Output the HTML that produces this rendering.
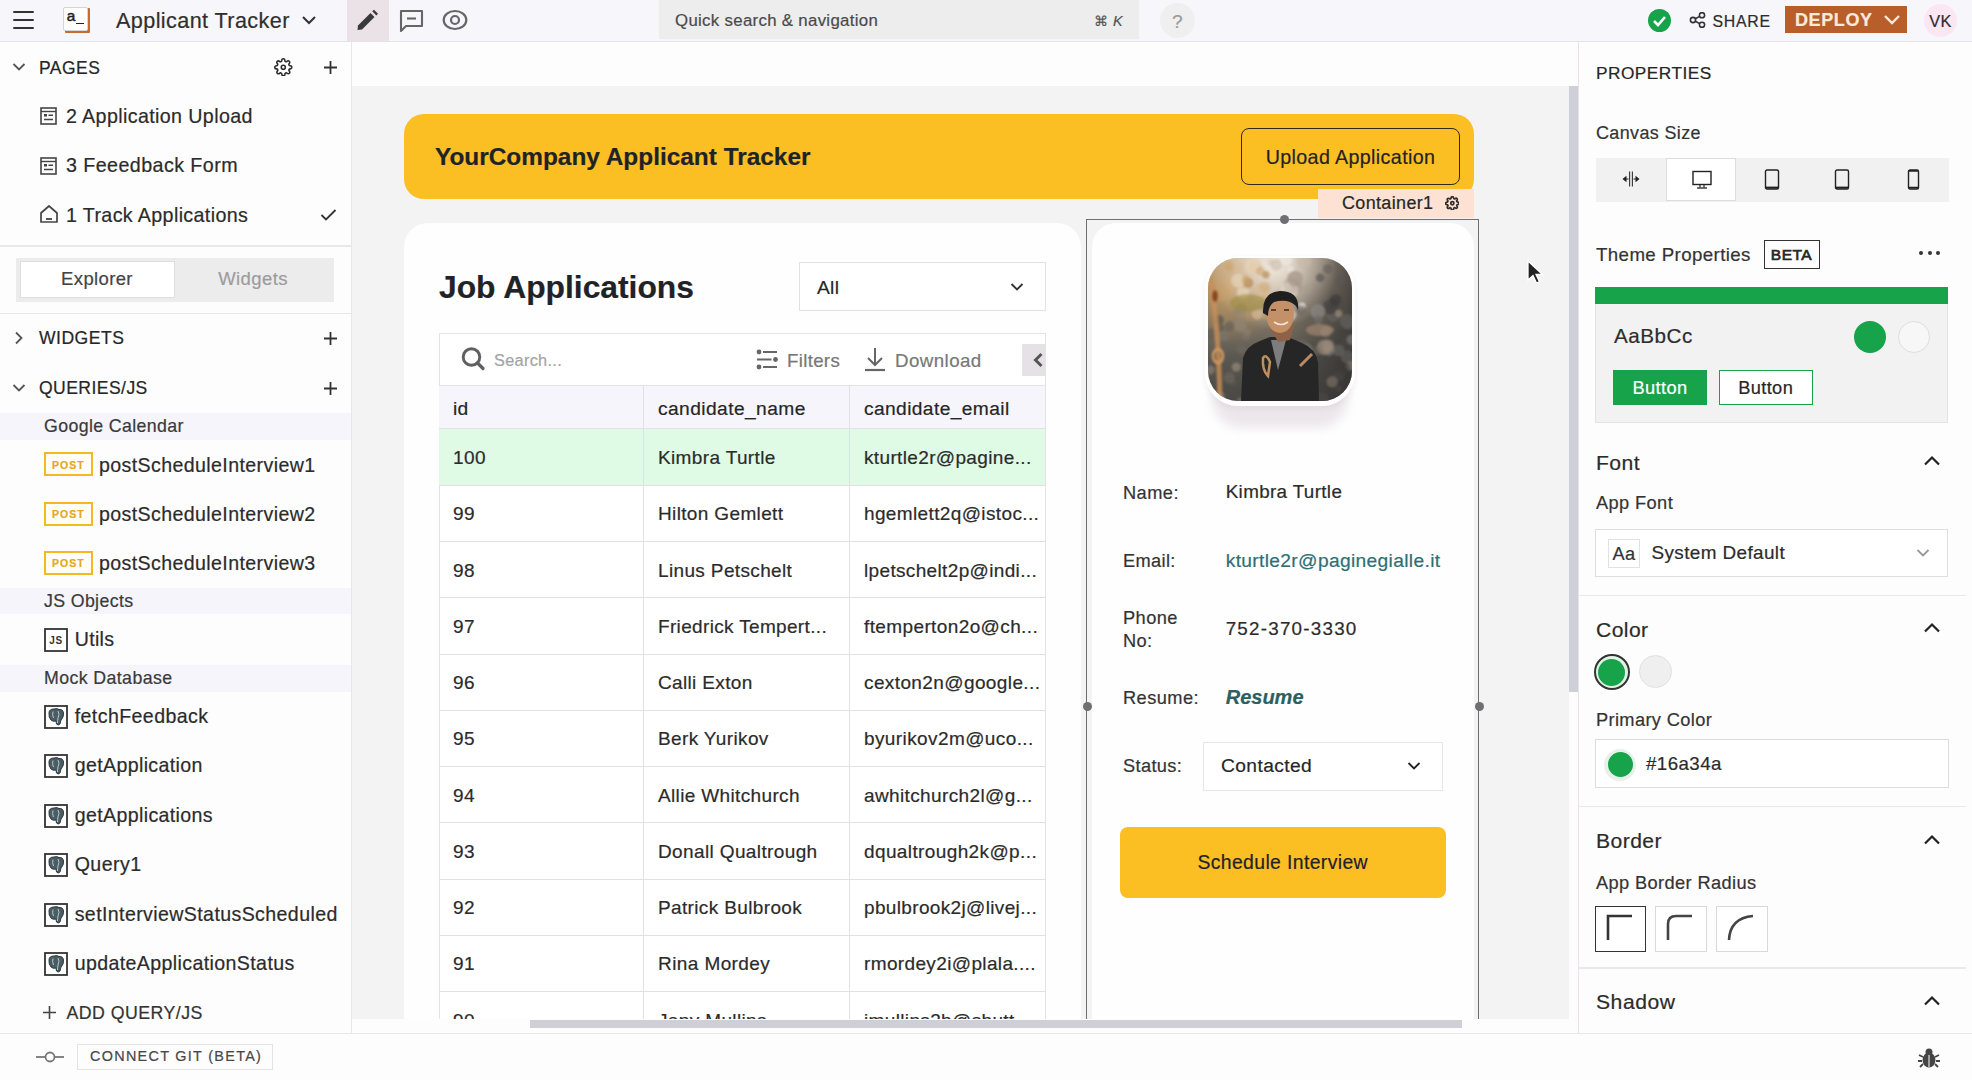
<!DOCTYPE html><html><head><meta charset="utf-8"><style>
html,body{margin:0;padding:0;width:1972px;height:1080px;overflow:hidden;background:#fdfdfd;}
body{position:relative;font-family:"Liberation Sans",sans-serif;-webkit-text-stroke:0.2px currentColor;}
body>div,body>svg{position:absolute;}
</style></head><body>
<div style="left:0px;top:0px;width:1972px;height:41px;background:#f7f7fb;"></div>
<div style="left:0px;top:41px;width:1972px;height:1px;background:#e7e2e8;"></div>
<div style="left:0px;top:42px;width:351px;height:991px;background:#fdfdfd;"></div>
<div style="left:351px;top:42px;width:1px;height:991px;background:#e9e6ea;"></div>
<div style="left:352px;top:42px;width:1226px;height:44px;background:#fdfdfd;"></div>
<div style="left:352px;top:86px;width:1217px;height:933px;background:#f3f3f3;"></div>
<div style="left:1569px;top:86px;width:9px;height:606px;background:#cfcfd7;"></div>
<div style="left:1569px;top:692px;width:9px;height:327px;background:#fdfdfd;"></div>
<div style="left:1578px;top:42px;width:1px;height:991px;background:#e9e2e9;"></div>
<div style="left:1579px;top:42px;width:393px;height:991px;background:#fdfdfd;"></div>
<div style="left:12.7px;top:10.5px;width:21.3px;height:2.0px;background:#333;border-radius:1px;"></div>
<div style="left:12.7px;top:18.9px;width:21.3px;height:2.0px;background:#333;border-radius:1px;"></div>
<div style="left:12.7px;top:27.4px;width:21.3px;height:2.0px;background:#333;border-radius:1px;"></div>
<div style="left:65px;top:8px;width:24.599999999999994px;height:24.6px;background:#c96a2e;border-radius:1px;"></div>
<div style="left:63.3px;top:6.5px;width:24.5px;height:24.5px;background:#fff;border:1px solid #d5d5d5;border-radius:2px;box-sizing:border-box;"></div>
<div style="top:7.46px;font-size:15.36px;line-height:18.43px;color:#222;font-weight:400;white-space:nowrap;letter-spacing:0.356px;left:66.8px;-webkit-text-stroke:0.5px #222;">a</div>
<div style="left:76px;top:22.5px;width:8px;height:1.8000000000000007px;background:#222;"></div>
<div style="top:7.56px;font-size:21.6px;line-height:25.92px;color:#2f2f2f;font-weight:400;white-space:nowrap;letter-spacing:0.409px;left:116px;">Applicant Tracker</div>
<svg style="left:300px;top:13px;" width="18" height="14" viewBox="0 0 18 14"><path d="M3 4 L9 10 L15 4" fill="none" stroke="#333" stroke-width="2"/></svg>
<div style="left:347px;top:0px;width:42px;height:41px;background:#ebe2e8;"></div>
<svg style="left:356px;top:9px;" width="24" height="24" viewBox="0 0 24 24"><path d="M1.5 21 L2 16.5 L14.5 4 L18.5 8 L6 20.5 Z" fill="#3a3a3a"/><path d="M16.2 2.3 L18 0.8 L22 4.8 L20.3 6.5 Z" fill="#3a3a3a"/></svg>
<svg style="left:399px;top:9px;" width="26" height="24" viewBox="0 0 26 24"><path d="M2 2 H23 V17 H7 L2 22 Z" fill="none" stroke="#666" stroke-width="2.1" stroke-linejoin="round"/><path d="M8 9.5 H17" stroke="#666" stroke-width="2.1"/></svg>
<svg style="left:442px;top:9px;" width="26" height="22" viewBox="0 0 26 22"><ellipse cx="13" cy="11" rx="11.3" ry="9" fill="none" stroke="#666" stroke-width="2.2"/><circle cx="13" cy="11" r="4" fill="none" stroke="#666" stroke-width="2.2"/></svg>
<div style="left:659px;top:0px;width:480px;height:38.5px;background:#ededed;"></div>
<div style="top:10.70px;font-size:16.8px;line-height:20.16px;color:#4a4a4a;font-weight:400;white-space:nowrap;letter-spacing:0.325px;left:675px;">Quick search &amp; navigation</div>
<div style="top:12.87px;font-size:14.4px;line-height:17.28px;color:#555;font-weight:400;white-space:nowrap;letter-spacing:0.339px;left:123px;width:1000px;text-align:right;">&#8984; <i>K</i></div>
<div style="left:1160px;top:3px;width:35px;height:35px;border-radius:50%;background:#efefef;"></div>
<div style="top:9.83px;font-size:19.2px;line-height:23.04px;color:#9a9a9a;font-weight:400;white-space:nowrap;letter-spacing:0.445px;left:677.5px;width:1000px;text-align:center;">?</div>
<div style="left:1648px;top:8.5px;width:23px;height:23px;border-radius:50%;background:#16a34a;"></div>
<svg style="left:1648px;top:8.5px;" width="23" height="23" viewBox="0 0 23 23"><path d="M6 12 L10 16 L17 8" fill="none" stroke="#fff" stroke-width="2.6"/></svg>
<svg style="left:1689px;top:12px;" width="18" height="16" viewBox="0 0 18 16"><circle cx="4" cy="8" r="2.6" fill="none" stroke="#333" stroke-width="1.6"/><circle cx="13" cy="3.2" r="2.6" fill="none" stroke="#333" stroke-width="1.6"/><circle cx="13" cy="12.8" r="2.6" fill="none" stroke="#333" stroke-width="1.6"/><path d="M6.3 6.8 L10.7 4.4 M6.3 9.2 L10.7 11.6" stroke="#333" stroke-width="1.6"/></svg>
<div style="top:11.71px;font-size:15.84px;line-height:19.01px;color:#2d2d2d;font-weight:500;white-space:nowrap;letter-spacing:0.743px;left:1712.5px;">SHARE</div>
<div style="left:1785px;top:6px;width:122px;height:27px;background:#b75e2b;"></div>
<div style="top:10.46px;font-size:18px;line-height:21.60px;color:#fce9d8;font-weight:700;white-space:nowrap;letter-spacing:0.600px;left:1795px;">DEPLOY</div>
<svg style="left:1882px;top:13px;" width="20" height="14" viewBox="0 0 20 14"><path d="M3 3 L10 10 L17 3" fill="none" stroke="#fce9d8" stroke-width="2.4"/></svg>
<div style="left:1924px;top:4px;width:33px;height:33px;border-radius:50%;background:#fbe7f3;"></div>
<div style="top:11.55px;font-size:16.32px;line-height:19.58px;color:#2d2d2d;font-weight:400;white-space:nowrap;letter-spacing:0.454px;left:1440.5px;width:1000px;text-align:center;">VK</div>
<svg style="left:12px;top:62px;" width="14" height="10" viewBox="0 0 14 10"><path d="M1.5 2 L7 7.5 L12.5 2" fill="none" stroke="#555" stroke-width="1.8"/></svg>
<div style="top:57.96px;font-size:17.47px;line-height:20.96px;color:#262626;font-weight:400;white-space:nowrap;letter-spacing:0.491px;left:39px;">PAGES</div>
<svg style="left:274.3px;top:57.7px;" width="18.6" height="18.6" viewBox="0 0 18.6 18.6"><g transform="scale(0.7750)"><path d="M19.4 15a1.65 1.65 0 0 0 .33 1.82l.06.06a2 2 0 0 1 0 2.83 2 2 0 0 1-2.83 0l-.06-.06a1.65 1.65 0 0 0-1.82-.33 1.650 1.65 0 0 0-1 1.51V21a2 2 0 0 1-2 2 2 2 0 0 1-2-2v-.09A1.65 1.65 0 0 0 9 19.4a1.65 1.65 0 0 0-1.82.33l-.06.06a2 2 0 0 1-2.830 0 2 2 0 0 1 0-2.83l.06-.06a1.65 1.65 0 0 0 .33-1.82 1.65 1.65 0 0 0-1.51-1H3a2 2 0 0 1-2-2 2 2 0 0 1 2-2h.09A1.65 1.65 0 0 0 4.6 9a1.65 1.65 0 0 0-.33-1.82l-.06-.06a2 2 0 0 1 0-2.83 2 2 0 0 1 2.83 0l.06.06a1.65 1.65 0 0 0 1.82.33H9a1.65 1.65 0 0 0 1-1.51V3a2 2 0 0 1 2-2 2 2 0 0 1 2 2v.09a1.65 1.65 0 0 0 1 1.51 1.65 1.65 0 0 0 1.82-.33l.06-.06a2 2 0 0 1 2.83 0 2 2 0 0 1 0 2.83l-.06.06a1.65 1.65 0 0 0-.33 1.82V9a1.65 1.65 0 0 0 1.51 1H21a2 2 0 0 1 2 2 2 2 0 0 1-2 2h-.09a1.65 1.65 0 0 0-1.51 1z" fill="none" stroke="#2d2d2d" stroke-width="2.06"/><circle cx="12" cy="12" r="2.6" fill="none" stroke="#2d2d2d" stroke-width="2.06"/></g></svg>
<svg style="left:323.5px;top:60.5px;" width="13" height="13" viewBox="0 0 13 13"><path d="M6.5 0 V13 M0 6.5 H13" stroke="#333" stroke-width="1.8"/></svg>
<svg style="left:40px;top:107px;" width="18" height="18" viewBox="0 0 18 18"><rect x="1" y="1" width="15" height="16" fill="none" stroke="#444" stroke-width="1.6"/><path d="M1 4.5 H16" stroke="#444" stroke-width="1.4"/><rect x="4" y="7" width="3" height="2.5" fill="#444"/><path d="M8.5 8.2 H13 M4 12.5 H13" stroke="#444" stroke-width="1.4"/></svg>
<div style="top:104.87px;font-size:19.68px;line-height:23.62px;color:#2b2b2b;font-weight:400;white-space:nowrap;letter-spacing:0.374px;left:66px;">2 Application Upload</div>
<svg style="left:40px;top:156.5px;" width="18" height="18" viewBox="0 0 18 18"><rect x="1" y="1" width="15" height="16" fill="none" stroke="#444" stroke-width="1.6"/><path d="M1 4.5 H16" stroke="#444" stroke-width="1.4"/><rect x="4" y="7" width="3" height="2.5" fill="#444"/><path d="M8.5 8.2 H13 M4 12.5 H13" stroke="#444" stroke-width="1.4"/></svg>
<div style="top:154.37px;font-size:19.68px;line-height:23.62px;color:#2b2b2b;font-weight:400;white-space:nowrap;letter-spacing:0.430px;left:66px;">3 Feeedback Form</div>
<svg style="left:39px;top:204px;" width="20" height="20" viewBox="0 0 20 20"><path d="M2 9 L10 2 L18 9 V18 H2 Z" fill="none" stroke="#444" stroke-width="1.7" stroke-linejoin="round"/><path d="M7 15 H13" stroke="#444" stroke-width="1.8"/></svg>
<div style="top:203.87px;font-size:19.68px;line-height:23.62px;color:#2b2b2b;font-weight:400;white-space:nowrap;letter-spacing:0.365px;left:66px;">1 Track Applications</div>
<svg style="left:320px;top:208px;" width="17" height="14" viewBox="0 0 17 14"><path d="M1.5 7 L6 11.5 L15.5 2" fill="none" stroke="#333" stroke-width="1.8"/></svg>
<div style="left:0px;top:245px;width:351px;height:1.5px;background:#ece5ea;"></div>
<div style="left:16px;top:257.5px;width:318px;height:44.0px;background:#ececec;"></div>
<div style="left:19.5px;top:261px;width:155.5px;height:37px;background:#fff;border:1px solid #dedede;box-sizing:border-box;"></div>
<div style="top:268.16px;font-size:18.53px;line-height:22.24px;color:#444;font-weight:400;white-space:nowrap;letter-spacing:0.359px;left:-403px;width:1000px;text-align:center;">Explorer</div>
<div style="top:268.16px;font-size:18.53px;line-height:22.24px;color:#9c9c9c;font-weight:400;white-space:nowrap;letter-spacing:0.398px;left:-247px;width:1000px;text-align:center;">Widgets</div>
<div style="left:0px;top:312.5px;width:351px;height:1.5px;background:#ebe5ea;"></div>
<svg style="left:14px;top:331px;" width="10" height="14" viewBox="0 0 10 14"><path d="M2 1.5 L7.5 7 L2 12.5" fill="none" stroke="#555" stroke-width="1.8"/></svg>
<div style="top:328.37px;font-size:17.57px;line-height:21.08px;color:#262626;font-weight:400;white-space:nowrap;letter-spacing:0.488px;left:39px;">WIDGETS</div>
<svg style="left:323.5px;top:331.5px;" width="13" height="13" viewBox="0 0 13 13"><path d="M6.5 0 V13 M0 6.5 H13" stroke="#333" stroke-width="1.8"/></svg>
<svg style="left:12px;top:383px;" width="14" height="10" viewBox="0 0 14 10"><path d="M1.5 2 L7 7.5 L12.5 2" fill="none" stroke="#555" stroke-width="1.8"/></svg>
<div style="top:378.37px;font-size:17.57px;line-height:21.08px;color:#262626;font-weight:400;white-space:nowrap;letter-spacing:0.435px;left:39px;">QUERIES/JS</div>
<svg style="left:323.5px;top:381.5px;" width="13" height="13" viewBox="0 0 13 13"><path d="M6.5 0 V13 M0 6.5 H13" stroke="#333" stroke-width="1.8"/></svg>
<div style="left:0px;top:413px;width:351px;height:27px;background:#f5f5fb;"></div>
<div style="top:416.19px;font-size:17.76px;line-height:21.31px;color:#3a3a3a;font-weight:400;white-space:nowrap;letter-spacing:0.373px;left:44px;">Google Calendar</div>
<div style="left:44px;top:452.2px;width:48.5px;height:24.19999999999999px;border:2px solid #f4b823;box-sizing:border-box;background:#fffdf6;"></div>
<div style="top:458.76px;font-size:10.5px;line-height:12.60px;color:#e3a81d;font-weight:700;white-space:nowrap;letter-spacing:1.000px;left:-431.7px;width:1000px;text-align:center;">POST</div>
<div style="top:453.67px;font-size:19.58px;line-height:23.50px;color:#2b2b2b;font-weight:400;white-space:nowrap;letter-spacing:0.394px;left:99px;">postScheduleInterview1</div>
<div style="left:44px;top:501.5px;width:48.5px;height:24.200000000000045px;border:2px solid #f4b823;box-sizing:border-box;background:#fffdf6;"></div>
<div style="top:508.06px;font-size:10.5px;line-height:12.60px;color:#e3a81d;font-weight:700;white-space:nowrap;letter-spacing:1.000px;left:-431.7px;width:1000px;text-align:center;">POST</div>
<div style="top:502.97px;font-size:19.58px;line-height:23.50px;color:#2b2b2b;font-weight:400;white-space:nowrap;letter-spacing:0.394px;left:99px;">postScheduleInterview2</div>
<div style="left:44px;top:550.8px;width:48.5px;height:24.200000000000045px;border:2px solid #f4b823;box-sizing:border-box;background:#fffdf6;"></div>
<div style="top:557.36px;font-size:10.5px;line-height:12.60px;color:#e3a81d;font-weight:700;white-space:nowrap;letter-spacing:1.000px;left:-431.7px;width:1000px;text-align:center;">POST</div>
<div style="top:552.27px;font-size:19.58px;line-height:23.50px;color:#2b2b2b;font-weight:400;white-space:nowrap;letter-spacing:0.394px;left:99px;">postScheduleInterview3</div>
<div style="left:0px;top:588px;width:351px;height:26px;background:#f5f5fb;"></div>
<div style="top:591.19px;font-size:17.76px;line-height:21.31px;color:#3a3a3a;font-weight:400;white-space:nowrap;letter-spacing:0.358px;left:44px;">JS Objects</div>
<svg style="left:44px;top:628px;" width="24" height="24" viewBox="0 0 24 24"><rect x="1" y="1" width="22" height="22" fill="#fff" stroke="#333" stroke-width="1.8"/><text x="12" y="16" font-family="Liberation Sans" font-size="10" font-weight="700" text-anchor="middle" letter-spacing="0.6" fill="#333">JS</text></svg>
<div style="top:628.17px;font-size:19.58px;line-height:23.50px;color:#2b2b2b;font-weight:400;white-space:nowrap;letter-spacing:0.317px;left:74.7px;">Utils</div>
<div style="left:0px;top:665px;width:351px;height:27px;background:#f5f5fb;"></div>
<div style="top:667.59px;font-size:17.76px;line-height:21.31px;color:#3a3a3a;font-weight:400;white-space:nowrap;letter-spacing:0.395px;left:44px;">Mock Database</div>
<svg style="left:44px;top:705.0px;" width="24" height="24" viewBox="0 0 24 24"><rect x="1" y="1" width="22" height="22" fill="#fff" stroke="#333" stroke-width="1.8"/><path d="M5 8 Q5 4 10 4 Q13 3 15 4.5 Q19 4 19.5 8 Q20 12 17 15 L16 19 Q14 21 12.5 19 L12 16 Q9 17 7 15 Q4.5 12 5 8Z" fill="#4e5b60" stroke="#2e3a3f" stroke-width="1"/><path d="M9 6.5 Q8 10 9.5 13 M14 6 Q16 9 14 13 Q13.5 16 13.5 18" stroke="#9fd3d8" stroke-width="1" fill="none"/></svg>
<div style="top:705.07px;font-size:19.58px;line-height:23.50px;color:#2b2b2b;font-weight:400;white-space:nowrap;letter-spacing:0.412px;left:74.7px;">fetchFeedback</div>
<svg style="left:44px;top:754.4px;" width="24" height="24" viewBox="0 0 24 24"><rect x="1" y="1" width="22" height="22" fill="#fff" stroke="#333" stroke-width="1.8"/><path d="M5 8 Q5 4 10 4 Q13 3 15 4.5 Q19 4 19.5 8 Q20 12 17 15 L16 19 Q14 21 12.5 19 L12 16 Q9 17 7 15 Q4.5 12 5 8Z" fill="#4e5b60" stroke="#2e3a3f" stroke-width="1"/><path d="M9 6.5 Q8 10 9.5 13 M14 6 Q16 9 14 13 Q13.5 16 13.5 18" stroke="#9fd3d8" stroke-width="1" fill="none"/></svg>
<div style="top:754.47px;font-size:19.58px;line-height:23.50px;color:#2b2b2b;font-weight:400;white-space:nowrap;letter-spacing:0.366px;left:74.7px;">getApplication</div>
<svg style="left:44px;top:803.8px;" width="24" height="24" viewBox="0 0 24 24"><rect x="1" y="1" width="22" height="22" fill="#fff" stroke="#333" stroke-width="1.8"/><path d="M5 8 Q5 4 10 4 Q13 3 15 4.5 Q19 4 19.5 8 Q20 12 17 15 L16 19 Q14 21 12.5 19 L12 16 Q9 17 7 15 Q4.5 12 5 8Z" fill="#4e5b60" stroke="#2e3a3f" stroke-width="1"/><path d="M9 6.5 Q8 10 9.5 13 M14 6 Q16 9 14 13 Q13.5 16 13.5 18" stroke="#9fd3d8" stroke-width="1" fill="none"/></svg>
<div style="top:803.87px;font-size:19.58px;line-height:23.50px;color:#2b2b2b;font-weight:400;white-space:nowrap;letter-spacing:0.369px;left:74.7px;">getApplications</div>
<svg style="left:44px;top:853.2px;" width="24" height="24" viewBox="0 0 24 24"><rect x="1" y="1" width="22" height="22" fill="#fff" stroke="#333" stroke-width="1.8"/><path d="M5 8 Q5 4 10 4 Q13 3 15 4.5 Q19 4 19.5 8 Q20 12 17 15 L16 19 Q14 21 12.5 19 L12 16 Q9 17 7 15 Q4.5 12 5 8Z" fill="#4e5b60" stroke="#2e3a3f" stroke-width="1"/><path d="M9 6.5 Q8 10 9.5 13 M14 6 Q16 9 14 13 Q13.5 16 13.5 18" stroke="#9fd3d8" stroke-width="1" fill="none"/></svg>
<div style="top:853.27px;font-size:19.58px;line-height:23.50px;color:#2b2b2b;font-weight:400;white-space:nowrap;letter-spacing:0.446px;left:74.7px;">Query1</div>
<svg style="left:44px;top:902.6px;" width="24" height="24" viewBox="0 0 24 24"><rect x="1" y="1" width="22" height="22" fill="#fff" stroke="#333" stroke-width="1.8"/><path d="M5 8 Q5 4 10 4 Q13 3 15 4.5 Q19 4 19.5 8 Q20 12 17 15 L16 19 Q14 21 12.5 19 L12 16 Q9 17 7 15 Q4.5 12 5 8Z" fill="#4e5b60" stroke="#2e3a3f" stroke-width="1"/><path d="M9 6.5 Q8 10 9.5 13 M14 6 Q16 9 14 13 Q13.5 16 13.5 18" stroke="#9fd3d8" stroke-width="1" fill="none"/></svg>
<div style="top:902.67px;font-size:19.58px;line-height:23.50px;color:#2b2b2b;font-weight:400;white-space:nowrap;letter-spacing:0.390px;left:74.7px;">setInterviewStatusScheduled</div>
<svg style="left:44px;top:952.0px;" width="24" height="24" viewBox="0 0 24 24"><rect x="1" y="1" width="22" height="22" fill="#fff" stroke="#333" stroke-width="1.8"/><path d="M5 8 Q5 4 10 4 Q13 3 15 4.5 Q19 4 19.5 8 Q20 12 17 15 L16 19 Q14 21 12.5 19 L12 16 Q9 17 7 15 Q4.5 12 5 8Z" fill="#4e5b60" stroke="#2e3a3f" stroke-width="1"/><path d="M9 6.5 Q8 10 9.5 13 M14 6 Q16 9 14 13 Q13.5 16 13.5 18" stroke="#9fd3d8" stroke-width="1" fill="none"/></svg>
<div style="top:952.07px;font-size:19.58px;line-height:23.50px;color:#2b2b2b;font-weight:400;white-space:nowrap;letter-spacing:0.383px;left:74.7px;">updateApplicationStatus</div>
<svg style="left:42.5px;top:1005.5px;" width="13" height="13" viewBox="0 0 13 13"><path d="M6.5 0 V13 M0 6.5 H13" stroke="#444" stroke-width="1.6"/></svg>
<div style="top:1003.19px;font-size:17.76px;line-height:21.31px;color:#333;font-weight:400;white-space:nowrap;letter-spacing:0.455px;left:66.5px;">ADD QUERY/JS</div>
<div style="left:404px;top:113.5px;width:1070px;height:85.0px;background:#fbbf24;border-radius:20px;"></div>
<div style="top:141.91px;font-size:24.4px;line-height:29.28px;color:#1f2328;font-weight:700;white-space:nowrap;left:435px;">YourCompany Applicant Tracker</div>
<div style="left:1241px;top:128px;width:219px;height:56.5px;border:1.6px solid #2f2b1c;border-radius:8px;box-sizing:border-box;"></div>
<div style="top:146.37px;font-size:19.68px;line-height:23.62px;color:#1f2328;font-weight:400;white-space:nowrap;letter-spacing:0.377px;left:850.5px;width:1000px;text-align:center;">Upload Application</div>
<div style="left:404px;top:223px;width:677px;height:877px;background:#fefefe;border-radius:24px;"></div>
<div style="top:267.70px;font-size:31.8px;line-height:38.16px;color:#1f2328;font-weight:700;white-space:nowrap;left:439px;">Job Applications</div>
<div style="left:799px;top:262px;width:247px;height:49px;background:#fff;border:1px solid #e5e0e6;box-sizing:border-box;"></div>
<div style="top:275.83px;font-size:19.2px;line-height:23.04px;color:#262626;font-weight:400;white-space:nowrap;letter-spacing:0.296px;left:817px;">All</div>
<svg style="left:1010px;top:282px;" width="14" height="10" viewBox="0 0 14 10"><path d="M1.5 2 L7 7.5 L12.5 2" fill="none" stroke="#333" stroke-width="1.8"/></svg>
<div style="left:438.5px;top:333px;width:607.5px;height:767px;background:#fff;border:1px solid #e6e1e6;box-sizing:border-box;"></div>
<svg style="left:460px;top:346px;" width="26" height="26" viewBox="0 0 26 26"><circle cx="11.5" cy="11" r="8.3" fill="none" stroke="#606060" stroke-width="2.9"/><path d="M17.5 17 L23 22.5" stroke="#606060" stroke-width="3.2" stroke-linecap="round"/></svg>
<div style="top:350.55px;font-size:16.32px;line-height:19.58px;color:#a3a3a3;font-weight:400;white-space:nowrap;letter-spacing:0.302px;left:494px;">Search...</div>
<svg style="left:756px;top:349px;" width="24" height="21" viewBox="0 0 24 21"><circle cx="3" cy="3" r="2.4" fill="#666"/><circle cx="19.5" cy="10.5" r="2.4" fill="#666"/><circle cx="3" cy="18" r="2.4" fill="#666"/><path d="M7 3 H21 M1 10.5 H15.5 M7 18 H21" stroke="#666" stroke-width="2.2"/></svg>
<div style="top:349.78px;font-size:18.72px;line-height:22.46px;color:#777;font-weight:400;white-space:nowrap;letter-spacing:0.303px;left:787px;">Filters</div>
<svg style="left:864px;top:347px;" width="24" height="25" viewBox="0 0 24 25"><path d="M11 1 V18 M4 11 L11 18 L18 11" fill="none" stroke="#666" stroke-width="2"/><path d="M1 23 H21" stroke="#666" stroke-width="2.2"/></svg>
<div style="top:349.78px;font-size:18.72px;line-height:22.46px;color:#777;font-weight:400;white-space:nowrap;letter-spacing:0.434px;left:895px;">Download</div>
<div style="left:1022px;top:344px;width:24px;height:32px;background:#e6e1e6;"></div>
<svg style="left:1032px;top:352px;" width="12" height="16" viewBox="0 0 12 16"><path d="M9.5 2 L3.5 8 L9.5 14" fill="none" stroke="#555" stroke-width="3"/></svg>
<div style="left:439px;top:385px;width:606px;height:44px;background:#f5f5fb;border-top:1px solid #e6e1e6;border-bottom:1px solid #e6e1e6;box-sizing:border-box;"></div>
<div style="top:396.83px;font-size:19.2px;line-height:23.04px;color:#262626;font-weight:400;white-space:nowrap;letter-spacing:0.311px;left:453px;">id</div>
<div style="top:396.83px;font-size:19.2px;line-height:23.04px;color:#262626;font-weight:400;white-space:nowrap;letter-spacing:0.423px;left:658px;">candidate_name</div>
<div style="top:396.83px;font-size:19.2px;line-height:23.04px;color:#262626;font-weight:400;white-space:nowrap;letter-spacing:0.388px;left:864px;">candidate_email</div>
<div style="left:439px;top:429px;width:606px;height:56.5px;background:#dffbe5;"></div>
<div style="top:447.01px;font-size:19.01px;line-height:22.81px;color:#2b2b2b;font-weight:400;white-space:nowrap;letter-spacing:0.440px;left:453px;">100</div>
<div style="top:447.01px;font-size:19.01px;line-height:22.81px;color:#2b2b2b;font-weight:400;white-space:nowrap;letter-spacing:0.362px;left:658px;">Kimbra Turtle</div>
<div style="top:447.01px;font-size:19.01px;line-height:22.81px;color:#2b2b2b;font-weight:400;white-space:nowrap;letter-spacing:0.353px;left:864px;">kturtle2r@pagine...</div>
<div style="left:439px;top:485px;width:606px;height:1px;background:#e4dfe4;"></div>
<div style="top:503.26px;font-size:19.01px;line-height:22.81px;color:#2b2b2b;font-weight:400;white-space:nowrap;letter-spacing:0.440px;left:453px;">99</div>
<div style="top:503.26px;font-size:19.01px;line-height:22.81px;color:#2b2b2b;font-weight:400;white-space:nowrap;letter-spacing:0.358px;left:658px;">Hilton Gemlett</div>
<div style="top:503.26px;font-size:19.01px;line-height:22.81px;color:#2b2b2b;font-weight:400;white-space:nowrap;letter-spacing:0.369px;left:864px;">hgemlett2q@istoc...</div>
<div style="left:439px;top:541px;width:606px;height:1px;background:#e4dfe4;"></div>
<div style="top:559.51px;font-size:19.01px;line-height:22.81px;color:#2b2b2b;font-weight:400;white-space:nowrap;letter-spacing:0.440px;left:453px;">98</div>
<div style="top:559.51px;font-size:19.01px;line-height:22.81px;color:#2b2b2b;font-weight:400;white-space:nowrap;letter-spacing:0.358px;left:658px;">Linus Petschelt</div>
<div style="top:559.51px;font-size:19.01px;line-height:22.81px;color:#2b2b2b;font-weight:400;white-space:nowrap;letter-spacing:0.346px;left:864px;">lpetschelt2p@indi...</div>
<div style="left:439px;top:597px;width:606px;height:1px;background:#e4dfe4;"></div>
<div style="top:615.76px;font-size:19.01px;line-height:22.81px;color:#2b2b2b;font-weight:400;white-space:nowrap;letter-spacing:0.440px;left:453px;">97</div>
<div style="top:615.76px;font-size:19.01px;line-height:22.81px;color:#2b2b2b;font-weight:400;white-space:nowrap;letter-spacing:0.338px;left:658px;">Friedrick Tempert...</div>
<div style="top:615.76px;font-size:19.01px;line-height:22.81px;color:#2b2b2b;font-weight:400;white-space:nowrap;letter-spacing:0.387px;left:864px;">ftemperton2o@ch...</div>
<div style="left:439px;top:654px;width:606px;height:1px;background:#e4dfe4;"></div>
<div style="top:672.01px;font-size:19.01px;line-height:22.81px;color:#2b2b2b;font-weight:400;white-space:nowrap;letter-spacing:0.440px;left:453px;">96</div>
<div style="top:672.01px;font-size:19.01px;line-height:22.81px;color:#2b2b2b;font-weight:400;white-space:nowrap;letter-spacing:0.344px;left:658px;">Calli Exton</div>
<div style="top:672.01px;font-size:19.01px;line-height:22.81px;color:#2b2b2b;font-weight:400;white-space:nowrap;letter-spacing:0.392px;left:864px;">cexton2n@google...</div>
<div style="left:439px;top:710px;width:606px;height:1px;background:#e4dfe4;"></div>
<div style="top:728.26px;font-size:19.01px;line-height:22.81px;color:#2b2b2b;font-weight:400;white-space:nowrap;letter-spacing:0.440px;left:453px;">95</div>
<div style="top:728.26px;font-size:19.01px;line-height:22.81px;color:#2b2b2b;font-weight:400;white-space:nowrap;letter-spacing:0.369px;left:658px;">Berk Yurikov</div>
<div style="top:728.26px;font-size:19.01px;line-height:22.81px;color:#2b2b2b;font-weight:400;white-space:nowrap;letter-spacing:0.399px;left:864px;">byurikov2m@uco...</div>
<div style="left:439px;top:766px;width:606px;height:1px;background:#e4dfe4;"></div>
<div style="top:784.51px;font-size:19.01px;line-height:22.81px;color:#2b2b2b;font-weight:400;white-space:nowrap;letter-spacing:0.440px;left:453px;">94</div>
<div style="top:784.51px;font-size:19.01px;line-height:22.81px;color:#2b2b2b;font-weight:400;white-space:nowrap;letter-spacing:0.355px;left:658px;">Allie Whitchurch</div>
<div style="top:784.51px;font-size:19.01px;line-height:22.81px;color:#2b2b2b;font-weight:400;white-space:nowrap;letter-spacing:0.375px;left:864px;">awhitchurch2l@g...</div>
<div style="left:439px;top:822px;width:606px;height:1px;background:#e4dfe4;"></div>
<div style="top:840.76px;font-size:19.01px;line-height:22.81px;color:#2b2b2b;font-weight:400;white-space:nowrap;letter-spacing:0.440px;left:453px;">93</div>
<div style="top:840.76px;font-size:19.01px;line-height:22.81px;color:#2b2b2b;font-weight:400;white-space:nowrap;letter-spacing:0.376px;left:658px;">Donall Qualtrough</div>
<div style="top:840.76px;font-size:19.01px;line-height:22.81px;color:#2b2b2b;font-weight:400;white-space:nowrap;letter-spacing:0.385px;left:864px;">dqualtrough2k@p...</div>
<div style="left:439px;top:879px;width:606px;height:1px;background:#e4dfe4;"></div>
<div style="top:897.01px;font-size:19.01px;line-height:22.81px;color:#2b2b2b;font-weight:400;white-space:nowrap;letter-spacing:0.440px;left:453px;">92</div>
<div style="top:897.01px;font-size:19.01px;line-height:22.81px;color:#2b2b2b;font-weight:400;white-space:nowrap;letter-spacing:0.360px;left:658px;">Patrick Bulbrook</div>
<div style="top:897.01px;font-size:19.01px;line-height:22.81px;color:#2b2b2b;font-weight:400;white-space:nowrap;letter-spacing:0.346px;left:864px;">pbulbrook2j@livej...</div>
<div style="left:439px;top:935px;width:606px;height:1px;background:#e4dfe4;"></div>
<div style="top:953.26px;font-size:19.01px;line-height:22.81px;color:#2b2b2b;font-weight:400;white-space:nowrap;letter-spacing:0.440px;left:453px;">91</div>
<div style="top:953.26px;font-size:19.01px;line-height:22.81px;color:#2b2b2b;font-weight:400;white-space:nowrap;letter-spacing:0.408px;left:658px;">Rina Mordey</div>
<div style="top:953.26px;font-size:19.01px;line-height:22.81px;color:#2b2b2b;font-weight:400;white-space:nowrap;letter-spacing:0.362px;left:864px;">rmordey2i@plala....</div>
<div style="left:439px;top:991px;width:606px;height:1px;background:#e4dfe4;"></div>
<div style="top:1009.51px;font-size:19.01px;line-height:22.81px;color:#2b2b2b;font-weight:400;white-space:nowrap;letter-spacing:0.440px;left:453px;">90</div>
<div style="top:1009.51px;font-size:19.01px;line-height:22.81px;color:#2b2b2b;font-weight:400;white-space:nowrap;letter-spacing:0.363px;left:658px;">Jany Mullins</div>
<div style="top:1009.51px;font-size:19.01px;line-height:22.81px;color:#2b2b2b;font-weight:400;white-space:nowrap;letter-spacing:0.353px;left:864px;">jmullins2h@shutt...</div>
<div style="left:643px;top:385px;width:1px;height:715px;background:#e4dfe4;"></div>
<div style="left:849px;top:385px;width:1px;height:715px;background:#e4dfe4;"></div>
<div style="left:1091.5px;top:223px;width:382.5px;height:877px;background:#fefefe;border-radius:24px;"></div>
<div style="left:1086px;top:218.5px;width:393px;height:811.5px;border:1.4px solid #6f6f73;box-sizing:border-box;"></div>
<div style="left:1279.5px;top:214.5px;width:9px;height:9px;border-radius:50%;background:#6f6f73;"></div>
<div style="left:1082.5px;top:702px;width:9px;height:9px;border-radius:50%;background:#6f6f73;"></div>
<div style="left:1474.5px;top:702px;width:9px;height:9px;border-radius:50%;background:#6f6f73;"></div>
<div style="left:1318px;top:188.5px;width:156px;height:29.0px;background:#fde2d3;"></div>
<div style="top:193.01px;font-size:17.95px;line-height:21.54px;color:#262626;font-weight:400;white-space:nowrap;letter-spacing:0.366px;left:1342px;">Container1</div>
<svg style="left:1444.7px;top:195.7px;" width="14.6" height="14.6" viewBox="0 0 14.6 14.6"><g transform="scale(0.6083)"><path d="M19.4 15a1.65 1.65 0 0 0 .33 1.82l.06.06a2 2 0 0 1 0 2.83 2 2 0 0 1-2.83 0l-.06-.06a1.65 1.65 0 0 0-1.82-.33 1.650 1.65 0 0 0-1 1.51V21a2 2 0 0 1-2 2 2 2 0 0 1-2-2v-.09A1.65 1.65 0 0 0 9 19.4a1.65 1.65 0 0 0-1.82.33l-.06.06a2 2 0 0 1-2.830 0 2 2 0 0 1 0-2.83l.06-.06a1.65 1.65 0 0 0 .33-1.82 1.65 1.65 0 0 0-1.51-1H3a2 2 0 0 1-2-2 2 2 0 0 1 2-2h.09A1.65 1.65 0 0 0 4.6 9a1.65 1.65 0 0 0-.33-1.82l-.06-.06a2 2 0 0 1 0-2.83 2 2 0 0 1 2.83 0l.06.06a1.65 1.65 0 0 0 1.82.33H9a1.65 1.65 0 0 0 1-1.51V3a2 2 0 0 1 2-2 2 2 0 0 1 2 2v.09a1.65 1.65 0 0 0 1 1.51 1.65 1.65 0 0 0 1.82-.33l.06-.06a2 2 0 0 1 2.83 0 2 2 0 0 1 0 2.83l-.06.06a1.65 1.65 0 0 0-.33 1.82V9a1.65 1.65 0 0 0 1.51 1H21a2 2 0 0 1 2 2 2 2 0 0 1-2 2h-.09a1.65 1.65 0 0 0-1.51 1z" fill="none" stroke="#2d2d2d" stroke-width="2.79"/><circle cx="12" cy="12" r="2.6" fill="none" stroke="#2d2d2d" stroke-width="2.79"/></g></svg>
<div style="left:1212px;top:300px;width:136px;height:128px;border-radius:30px;background:#ece7eb;filter:blur(5px);"></div>
<div style="left:1205px;top:256px;width:150px;height:150px;border-radius:33px;background:#fff;box-shadow:0 3px 6px rgba(70,50,90,0.06);"></div>
<svg style="left:1208px;top:258px;" width="144" height="143" viewBox="0 0 144 143">
<defs><clipPath id="pc"><rect x="0" y="0" width="144" height="143" rx="30"/></clipPath>
<linearGradient id="bgv" x1="0" y1="0" x2="0" y2="1"><stop offset="0" stop-color="#c9b59a"/><stop offset="0.35" stop-color="#8c7f6c"/><stop offset="0.7" stop-color="#5a5751"/><stop offset="1" stop-color="#4a4844"/></linearGradient>
<radialGradient id="hl" cx="0.45" cy="0.05" r="0.45"><stop offset="0" stop-color="#f2ebe2" stop-opacity="0.95"/><stop offset="1" stop-color="#f2ebe2" stop-opacity="0"/></radialGradient>
<radialGradient id="warm" cx="0.15" cy="0.2" r="0.4"><stop offset="0" stop-color="#c89a5e" stop-opacity="0.9"/><stop offset="1" stop-color="#b08850" stop-opacity="0"/></radialGradient>
<linearGradient id="dark" x1="0" y1="0" x2="1" y2="0"><stop offset="0.5" stop-color="#2e2e2e" stop-opacity="0"/><stop offset="1" stop-color="#2e2e2e" stop-opacity="0.75"/></linearGradient>
<filter id="bl"><feGaussianBlur stdDeviation="1.2"/></filter>
</defs>
<g clip-path="url(#pc)">
<rect width="144" height="143" fill="url(#bgv)"/>
<rect width="144" height="143" fill="url(#warm)"/>
<rect width="144" height="143" fill="url(#dark)"/>
<rect width="144" height="143" fill="url(#hl)"/>
<g filter="url(#bl)">
<circle cx="46.6" cy="9.1" r="6.9" fill="#d9b98f" opacity="0.72"/><circle cx="13.6" cy="35.0" r="8.5" fill="#c9a06a" opacity="0.37"/><circle cx="62.4" cy="4.2" r="3.5" fill="#c8b8a8" opacity="0.38"/><circle cx="81.4" cy="56.8" r="6.8" fill="#f0e8e0" opacity="0.61"/><circle cx="57.1" cy="58.6" r="3.3" fill="#c9a06a" opacity="0.48"/><circle cx="20.8" cy="7.1" r="4.9" fill="#c9a06a" opacity="0.40"/><circle cx="82.3" cy="11.3" r="3.6" fill="#f0e8e0" opacity="0.60"/><circle cx="89.1" cy="29.8" r="6.2" fill="#a89a8a" opacity="0.56"/><circle cx="133.0" cy="21.7" r="4.5" fill="#5a5855" opacity="0.66"/><circle cx="35.1" cy="34.5" r="6.2" fill="#e8d8c0" opacity="0.68"/><circle cx="41.5" cy="58.8" r="3.7" fill="#b89060" opacity="0.42"/><circle cx="49.3" cy="56.0" r="5.5" fill="#d9b98f" opacity="0.69"/><circle cx="82.5" cy="52.5" r="4.9" fill="#a89a8a" opacity="0.62"/><circle cx="83.5" cy="27.4" r="8.0" fill="#a89a8a" opacity="0.56"/><circle cx="95.6" cy="3.6" r="7.2" fill="#c8b8a8" opacity="0.48"/><circle cx="55.6" cy="40.1" r="3.1" fill="#b89060" opacity="0.51"/><circle cx="88.0" cy="29.6" r="4.3" fill="#a89a8a" opacity="0.41"/><circle cx="35.7" cy="23.5" r="8.2" fill="#d9b98f" opacity="0.42"/><circle cx="57.8" cy="16.7" r="3.8" fill="#b89060" opacity="0.74"/><circle cx="40.1" cy="24.9" r="5.2" fill="#b89060" opacity="0.78"/><circle cx="21.7" cy="10.6" r="4.4" fill="#c9a06a" opacity="0.36"/><circle cx="119.7" cy="10.9" r="4.7" fill="#5a5855" opacity="0.54"/><circle cx="53.2" cy="34.0" r="8.7" fill="#d9b98f" opacity="0.56"/><circle cx="125.4" cy="57.1" r="7.1" fill="#6a6662" opacity="0.53"/><circle cx="56.8" cy="28.9" r="5.4" fill="#c9a06a" opacity="0.38"/><circle cx="30.1" cy="9.7" r="5.0" fill="#d9b98f" opacity="0.40"/><circle cx="81.6" cy="32.2" r="8.7" fill="#f0e8e0" opacity="0.38"/><circle cx="29.9" cy="22.6" r="6.8" fill="#e8d8c0" opacity="0.62"/><circle cx="68.3" cy="6.9" r="5.9" fill="#c8b8a8" opacity="0.57"/><circle cx="44.9" cy="8.6" r="7.5" fill="#e8d8c0" opacity="0.57"/><circle cx="99.7" cy="31.0" r="4.2" fill="#a89a8a" opacity="0.42"/><circle cx="78.2" cy="1.6" r="6.2" fill="#f0e8e0" opacity="0.66"/><circle cx="37.6" cy="22.0" r="4.0" fill="#c9a06a" opacity="0.59"/><circle cx="112.2" cy="19.8" r="4.3" fill="#5a5855" opacity="0.71"/><circle cx="117.8" cy="44.4" r="4.4" fill="#6a6662" opacity="0.51"/><circle cx="4.2" cy="1.7" r="4.7" fill="#e8d8c0" opacity="0.44"/><circle cx="87.1" cy="20.7" r="7.9" fill="#a89a8a" opacity="0.78"/><circle cx="52.5" cy="13.2" r="4.4" fill="#c9a06a" opacity="0.50"/><circle cx="69.5" cy="59.1" r="6.7" fill="#f0e8e0" opacity="0.57"/><circle cx="94.0" cy="48.0" r="3.5" fill="#f0e8e0" opacity="0.76"/><circle cx="131.2" cy="117.3" r="5.4" fill="#4a4846" opacity="0.57"/><circle cx="122.5" cy="48.9" r="7.7" fill="#3a3836" opacity="0.59"/><circle cx="128.9" cy="48.7" r="3.8" fill="#4a4846" opacity="0.41"/><circle cx="119.9" cy="87.9" r="6.3" fill="#9a8a7a" opacity="0.73"/><circle cx="142.8" cy="107.7" r="4.8" fill="#9a8a7a" opacity="0.62"/><circle cx="86.3" cy="122.3" r="6.6" fill="#6e6a66" opacity="0.61"/><circle cx="140.1" cy="84.7" r="7.4" fill="#4a4846" opacity="0.41"/><circle cx="97.6" cy="91.6" r="6.8" fill="#8a8682" opacity="0.50"/><circle cx="109.7" cy="53.5" r="7.6" fill="#8a8682" opacity="0.76"/><circle cx="124.1" cy="123.9" r="5.6" fill="#9a8a7a" opacity="0.45"/><circle cx="94.0" cy="92.6" r="7.4" fill="#4a4846" opacity="0.64"/><circle cx="130.8" cy="55.4" r="3.7" fill="#9a8a7a" opacity="0.69"/><circle cx="117.8" cy="73.6" r="5.6" fill="#9a8a7a" opacity="0.59"/><circle cx="130.8" cy="131.0" r="3.3" fill="#4a4846" opacity="0.51"/><circle cx="130.6" cy="92.3" r="5.8" fill="#6e6a66" opacity="0.58"/><circle cx="121.1" cy="92.1" r="5.6" fill="#8a8682" opacity="0.58"/><circle cx="116.5" cy="89.2" r="7.7" fill="#9a8a7a" opacity="0.75"/><circle cx="140.6" cy="66.7" r="5.8" fill="#4a4846" opacity="0.74"/><circle cx="93.1" cy="52.5" r="5.2" fill="#6e6a66" opacity="0.67"/><circle cx="110.3" cy="61.9" r="4.5" fill="#6e6a66" opacity="0.76"/><circle cx="94.1" cy="113.8" r="6.3" fill="#4a4846" opacity="0.50"/><circle cx="93.1" cy="88.2" r="6.7" fill="#6e6a66" opacity="0.56"/><circle cx="113.7" cy="142.0" r="7.2" fill="#4a4846" opacity="0.68"/><circle cx="143.7" cy="81.6" r="5.1" fill="#8a8682" opacity="0.53"/><circle cx="127.6" cy="42.0" r="5.8" fill="#3a3836" opacity="0.68"/><circle cx="107.7" cy="93.3" r="4.5" fill="#6e6a66" opacity="0.45"/><circle cx="139.2" cy="63.5" r="7.4" fill="#6e6a66" opacity="0.51"/><circle cx="87.3" cy="120.2" r="4.4" fill="#4a4846" opacity="0.73"/><circle cx="135.1" cy="109.6" r="7.7" fill="#3a3836" opacity="0.46"/><circle cx="139.2" cy="98.8" r="6.5" fill="#6e6a66" opacity="0.51"/><circle cx="32.0" cy="67.1" r="6.6" fill="#8e8472" opacity="0.78"/><circle cx="25.4" cy="124.6" r="3.3" fill="#5e5a52" opacity="0.43"/><circle cx="34.5" cy="92.2" r="4.4" fill="#6a665c" opacity="0.77"/><circle cx="10.7" cy="62.0" r="5.1" fill="#5e5a52" opacity="0.78"/><circle cx="38.8" cy="74.4" r="3.7" fill="#8e8472" opacity="0.65"/><circle cx="21.2" cy="69.1" r="4.8" fill="#5e5a52" opacity="0.51"/><circle cx="32.1" cy="142.5" r="3.1" fill="#7a7468" opacity="0.69"/><circle cx="22.0" cy="67.6" r="4.9" fill="#6a665c" opacity="0.44"/><circle cx="32.8" cy="90.2" r="5.0" fill="#6a665c" opacity="0.79"/><circle cx="12.3" cy="70.0" r="3.9" fill="#5e5a52" opacity="0.73"/><circle cx="28.3" cy="109.1" r="4.6" fill="#8e8472" opacity="0.79"/><circle cx="33.5" cy="51.3" r="5.5" fill="#8e8472" opacity="0.57"/><circle cx="2.2" cy="111.9" r="4.5" fill="#8e8472" opacity="0.64"/><circle cx="27.7" cy="54.2" r="3.7" fill="#8e8472" opacity="0.58"/><circle cx="10.5" cy="139.4" r="6.9" fill="#8e8472" opacity="0.50"/><circle cx="38.6" cy="78.8" r="4.4" fill="#7a7468" opacity="0.53"/><circle cx="3.4" cy="75.9" r="5.6" fill="#5e5a52" opacity="0.60"/><circle cx="0.2" cy="74.6" r="3.4" fill="#6a665c" opacity="0.63"/><circle cx="15.8" cy="77.9" r="5.5" fill="#7a7468" opacity="0.63"/><circle cx="21.2" cy="119.8" r="5.6" fill="#6a665c" opacity="0.71"/>
<path d="M2 20 Q10 60 12 143" stroke="#c98f55" stroke-width="5" fill="none" opacity="0.8"/>
<ellipse cx="7" cy="38" rx="3" ry="6" fill="#8a4a20"/>
<ellipse cx="10" cy="98" rx="5" ry="7" fill="none" stroke="#d29a60" stroke-width="2.5"/>
<ellipse cx="112" cy="72" rx="14" ry="6" fill="#a08570" opacity="0.7"/>
<ellipse cx="40" cy="45" rx="18" ry="9" fill="#9d8a3c" opacity="0.6"/>
</g>
<path d="M33 143 L35 100 Q38 88 52 83 L62 79 L80 79 L94 85 Q108 91 110 104 L111 143Z" fill="#262626"/>
<path d="M63 82 L70 112 L78 82Z" fill="#7d7d7d"/>
<path d="M55 100 Q58 95 62 104 L60 118 Q54 112 55 100Z" fill="none" stroke="#c08e62" stroke-width="2.5"/>
<path d="M92 108 L104 96" stroke="#b98a66" stroke-width="3"/>
<path d="M60 66 L70 84 L82 82 L86 66Z" fill="#8f6247"/>
<ellipse cx="72" cy="56" rx="14" ry="19" fill="#c39068"/>
<path d="M55 55 Q54 34 72 33 Q92 33 90 52 L88 48 Q80 40 66 44 Q60 48 60 58Z" fill="#1f1f1f"/>
<path d="M66 64 Q73 69 80 64" stroke="#efe6dc" stroke-width="1.6" fill="none"/><path d="M63 52 H68 M76 52 H81" stroke="#3a2a20" stroke-width="1.5"/>
</g></svg>
<div style="top:481.74px;font-size:18.24px;line-height:21.89px;color:#333;font-weight:400;white-space:nowrap;letter-spacing:0.448px;left:1123px;">Name:</div>
<div style="top:481.19px;font-size:18.82px;line-height:22.58px;color:#2b2b2b;font-weight:400;white-space:nowrap;letter-spacing:0.359px;left:1225.7px;">Kimbra Turtle</div>
<div style="top:549.74px;font-size:18.24px;line-height:21.89px;color:#333;font-weight:400;white-space:nowrap;letter-spacing:0.352px;left:1123px;">Email:</div>
<div style="top:548.83px;font-size:19.2px;line-height:23.04px;color:#2f6f74;font-weight:400;white-space:nowrap;letter-spacing:0.344px;left:1225.7px;">kturtle2r@paginegialle.it</div>
<div style="top:607.24px;font-size:18.24px;line-height:21.89px;color:#333;font-weight:400;white-space:nowrap;letter-spacing:0.439px;left:1123px;">Phone</div>
<div style="top:630.24px;font-size:18.24px;line-height:21.89px;color:#333;font-weight:400;white-space:nowrap;letter-spacing:0.394px;left:1123px;">No:</div>
<div style="top:618.19px;font-size:18.82px;line-height:22.58px;color:#2b2b2b;font-weight:400;white-space:nowrap;letter-spacing:1.223px;left:1225.7px;">752-370-3330</div>
<div style="top:686.74px;font-size:18.24px;line-height:21.89px;color:#333;font-weight:400;white-space:nowrap;letter-spacing:0.434px;left:1123px;">Resume:</div>
<div style="top:685.07px;font-size:20px;line-height:24.00px;color:#2b6061;font-weight:700;white-space:nowrap;left:1225.7px;font-style:italic;">Resume</div>
<div style="top:754.74px;font-size:18.24px;line-height:21.89px;color:#333;font-weight:400;white-space:nowrap;letter-spacing:0.338px;left:1123px;">Status:</div>
<div style="left:1202.5px;top:742px;width:240.5px;height:48.5px;background:#fff;border:1px solid #e6e6e6;box-sizing:border-box;"></div>
<div style="top:753.83px;font-size:19.2px;line-height:23.04px;color:#262626;font-weight:400;white-space:nowrap;letter-spacing:0.405px;left:1221px;">Contacted</div>
<svg style="left:1407px;top:761px;" width="14" height="10" viewBox="0 0 14 10"><path d="M1.5 2 L7 7.5 L12.5 2" fill="none" stroke="#222" stroke-width="1.8"/></svg>
<div style="left:1119.5px;top:826.5px;width:326.5px;height:71.0px;background:#fbbf24;border-radius:8px;"></div>
<div style="top:851.15px;font-size:19.39px;line-height:23.27px;color:#1f2328;font-weight:400;white-space:nowrap;letter-spacing:0.379px;left:782.7px;width:1000px;text-align:center;">Schedule Interview</div>
<svg style="left:1526px;top:259px;" width="20" height="28" viewBox="0 0 20 28"><path d="M2 2 L2 21 L7 16.5 L10.5 24 L13.5 22.7 L10 15.5 L16.5 15.5 Z" fill="#222" stroke="#fff" stroke-width="1.3"/></svg>
<div style="left:352px;top:1019px;width:1226px;height:14px;background:#fdfdfd;"></div>
<div style="left:0px;top:1033px;width:1972px;height:1px;background:#e9e6ea;"></div>
<div style="left:0px;top:1034px;width:1972px;height:46px;background:#fdfdfd;"></div>
<div style="left:530px;top:1019.5px;width:932px;height:8.0px;background:#cfcfd7;"></div>
<svg style="left:36px;top:1050px;" width="28" height="14" viewBox="0 0 28 14"><path d="M0 7 H28" stroke="#777" stroke-width="1.8"/><circle cx="14" cy="7" r="4.5" fill="#fdfdfd" stroke="#777" stroke-width="1.8"/></svg>
<div style="left:77px;top:1043.5px;width:196px;height:26.5px;border:1px solid #e3e3e3;box-sizing:border-box;background:#fdfdfd;"></div>
<div style="top:1048.37px;font-size:14.4px;line-height:17.28px;color:#474747;font-weight:400;white-space:nowrap;letter-spacing:1.304px;left:90px;">CONNECT GIT (BETA)</div>
<svg style="left:1917px;top:1046px;" width="24" height="24" viewBox="0 0 24 24"><ellipse cx="12" cy="14" rx="6.5" ry="7.5" fill="#444"/><circle cx="12" cy="6" r="3.5" fill="#444"/><path d="M2 9 L6 11 M22 9 L18 11 M1 15 H5 M23 15 H19 M3 21 L6 18 M21 21 L18 18" stroke="#444" stroke-width="1.8"/><path d="M12 9 V21" stroke="#fdfdfd" stroke-width="1"/></svg>
<div style="top:62.94px;font-size:17.28px;line-height:20.74px;color:#262626;font-weight:400;white-space:nowrap;letter-spacing:0.463px;left:1596px;">PROPERTIES</div>
<div style="top:123.01px;font-size:17.95px;line-height:21.54px;color:#333;font-weight:400;white-space:nowrap;letter-spacing:0.382px;left:1596px;">Canvas Size</div>
<div style="left:1596px;top:157.5px;width:353px;height:44.0px;background:#f1f1f1;"></div>
<div style="left:1666px;top:158px;width:69.5px;height:43px;background:#fff;border:1px solid #dcdcdc;box-sizing:border-box;"></div>
<svg style="left:1621px;top:169px;" width="20" height="20" viewBox="0 0 20 20"><path d="M8.6 2.5 V17.5 M11.4 2.5 V17.5" stroke="#333" stroke-width="1.1"/><path d="M1.5 10 L5.5 6.8 V13.2Z M18.5 10 L14.5 6.8 V13.2Z" fill="#222"/><path d="M4 10 H7.5 M12.5 10 H16" stroke="#222" stroke-width="1.1"/></svg>
<svg style="left:1691px;top:170px;" width="22" height="20" viewBox="0 0 22 20"><rect x="2" y="1.5" width="18" height="13" fill="none" stroke="#222" stroke-width="1.4"/><path d="M9 14.5 V17.5 M13 14.5 V17.5" stroke="#222" stroke-width="1.2"/><path d="M6 18 H16" stroke="#222" stroke-width="1.3"/></svg>
<svg style="left:1764px;top:169px;" width="16" height="21" viewBox="0 0 16 21"><rect x="1.5" y="1" width="13" height="19" rx="1.5" fill="none" stroke="#222" stroke-width="1.4"/><path d="M1.5 18.6 H14.5" stroke="#222" stroke-width="2"/></svg>
<svg style="left:1834px;top:169px;" width="16" height="21" viewBox="0 0 16 21"><rect x="1.5" y="1" width="13" height="19" rx="1.5" fill="none" stroke="#222" stroke-width="1.4"/><path d="M1.5 18.6 H14.5" stroke="#222" stroke-width="2"/></svg>
<svg style="left:1906.5px;top:169px;" width="13" height="21" viewBox="0 0 13 21"><rect x="1.5" y="1" width="10" height="19" rx="1.5" fill="none" stroke="#222" stroke-width="1.4"/><path d="M1.5 18.6 H11.5 M1.5 1.8 H11.5" stroke="#222" stroke-width="1.8"/></svg>
<div style="top:243.78px;font-size:18.72px;line-height:22.46px;color:#333;font-weight:400;white-space:nowrap;letter-spacing:0.387px;left:1596px;">Theme Properties</div>
<div style="left:1763.5px;top:240px;width:56.0px;height:29px;border:1.3px solid #333;box-sizing:border-box;"></div>
<div style="top:245.83px;font-size:15.5px;line-height:18.60px;color:#262626;font-weight:400;white-space:nowrap;letter-spacing:0.500px;left:1291.5px;width:1000px;text-align:center;-webkit-text-stroke:0.7px #262626;">BETA</div>
<div style="left:1919px;top:251px;width:4.2px;height:4.2px;border-radius:50%;background:#333;"></div>
<div style="left:1927.5px;top:251px;width:4.2px;height:4.2px;border-radius:50%;background:#333;"></div>
<div style="left:1936px;top:251px;width:4.2px;height:4.2px;border-radius:50%;background:#333;"></div>
<div style="left:1595px;top:287px;width:353px;height:136px;background:#f2f2f2;border:1px solid #e3e3e3;box-sizing:border-box;"></div>
<div style="left:1595px;top:287px;width:353px;height:16.5px;background:#16a34a;"></div>
<div style="top:324.46px;font-size:20.64px;line-height:24.77px;color:#2d2d2d;font-weight:400;white-space:nowrap;letter-spacing:0.526px;left:1614px;">AaBbCc</div>
<div style="left:1854px;top:321px;width:32px;height:32px;border-radius:50%;background:#16a34a;"></div>
<div style="left:1898px;top:321px;width:32px;height:32px;border-radius:50%;background:#f7f7f7;border:1px solid #dedede;box-sizing:border-box;"></div>
<div style="left:1613px;top:370px;width:94px;height:34.5px;background:#16a34a;"></div>
<div style="top:376.74px;font-size:18.24px;line-height:21.89px;color:#fff;font-weight:400;white-space:nowrap;letter-spacing:0.366px;left:1160px;width:1000px;text-align:center;">Button</div>
<div style="left:1719px;top:370px;width:93.5px;height:34.5px;background:#fff;border:1.3px solid #16a34a;box-sizing:border-box;"></div>
<div style="top:376.74px;font-size:18.24px;line-height:21.89px;color:#262626;font-weight:400;white-space:nowrap;letter-spacing:0.366px;left:1265.7px;width:1000px;text-align:center;">Button</div>
<div style="top:450.01px;font-size:21.12px;line-height:25.34px;color:#2b2b2b;font-weight:400;white-space:nowrap;letter-spacing:0.440px;left:1596px;">Font</div>
<svg style="left:1923px;top:455px;" width="18" height="12" viewBox="0 0 18 12"><path d="M2 9.5 L9 2.5 L16 9.5" fill="none" stroke="#222" stroke-width="2.2"/></svg>
<div style="top:492.34px;font-size:18.24px;line-height:21.89px;color:#333;font-weight:400;white-space:nowrap;letter-spacing:0.385px;left:1596px;">App Font</div>
<div style="left:1595px;top:528.5px;width:353px;height:48.5px;background:#fff;border:1px solid #e0dde0;box-sizing:border-box;"></div>
<div style="left:1608px;top:538.5px;width:32px;height:29.0px;background:#fff;border:1px solid #e2e2e2;box-sizing:border-box;"></div>
<div style="top:542.74px;font-size:18.24px;line-height:21.89px;color:#333;font-weight:400;white-space:nowrap;letter-spacing:0.465px;left:1124px;width:1000px;text-align:center;">Aa</div>
<div style="top:541.60px;font-size:18.91px;line-height:22.69px;color:#2b2b2b;font-weight:400;white-space:nowrap;letter-spacing:0.382px;left:1651.5px;">System Default</div>
<svg style="left:1916px;top:548px;" width="14" height="10" viewBox="0 0 14 10"><path d="M1.5 2 L7 7.5 L12.5 2" fill="none" stroke="#999" stroke-width="1.8"/></svg>
<div style="left:1579px;top:594.5px;width:387px;height:1.5px;background:#ebe8eb;"></div>
<div style="top:616.51px;font-size:21.12px;line-height:25.34px;color:#2b2b2b;font-weight:400;white-space:nowrap;letter-spacing:0.421px;left:1596px;">Color</div>
<svg style="left:1923px;top:622px;" width="18" height="12" viewBox="0 0 18 12"><path d="M2 9.5 L9 2.5 L16 9.5" fill="none" stroke="#222" stroke-width="2.2"/></svg>
<div style="left:1593.5px;top:654px;width:36px;height:36px;border-radius:50%;background:#dff5e6;border:2px solid #333;box-sizing:border-box;"></div>
<div style="left:1598px;top:658.5px;width:27px;height:27px;border-radius:50%;background:#16a34a;"></div>
<div style="left:1639px;top:655px;width:33px;height:33px;border-radius:50%;background:#efefef;border:1px solid #e0e0e0;box-sizing:border-box;"></div>
<div style="top:709.44px;font-size:18.24px;line-height:21.89px;color:#333;font-weight:400;white-space:nowrap;letter-spacing:0.357px;left:1596px;">Primary Color</div>
<div style="left:1595px;top:739px;width:353.5px;height:49px;background:#fff;border:1px solid #dcdcdc;box-sizing:border-box;"></div>
<div style="left:1604px;top:748.5px;width:32px;height:32px;border-radius:50%;background:#e8f0ea;"></div>
<div style="left:1607.5px;top:752px;width:25px;height:25px;border-radius:50%;background:#16a34a;"></div>
<div style="top:753.28px;font-size:18.72px;line-height:22.46px;color:#2b2b2b;font-weight:400;white-space:nowrap;letter-spacing:0.434px;left:1646px;">#16a34a</div>
<div style="left:1579px;top:805.5px;width:387px;height:1.5px;background:#ebe8eb;"></div>
<div style="top:828.01px;font-size:21.12px;line-height:25.34px;color:#2b2b2b;font-weight:400;white-space:nowrap;letter-spacing:0.440px;left:1596px;">Border</div>
<svg style="left:1923px;top:834px;" width="18" height="12" viewBox="0 0 18 12"><path d="M2 9.5 L9 2.5 L16 9.5" fill="none" stroke="#222" stroke-width="2.2"/></svg>
<div style="top:871.74px;font-size:18.24px;line-height:21.89px;color:#333;font-weight:400;white-space:nowrap;letter-spacing:0.378px;left:1596px;">App Border Radius</div>
<div style="left:1594.5px;top:905.5px;width:51.5px;height:46.0px;border:1.3px solid #333;box-sizing:border-box;background:#fff;"></div>
<svg style="left:1594.5px;top:905.5px;" width="52" height="46" viewBox="0 0 52 46"><path d="M13 34 V10 H37" fill="none" stroke="#333" stroke-width="2.6"/></svg>
<div style="left:1655px;top:905.5px;width:51.5px;height:46.0px;border:1px solid #d9d9d9;box-sizing:border-box;background:#fff;"></div>
<svg style="left:1655px;top:905.5px;" width="52" height="46" viewBox="0 0 52 46"><path d="M13 34 V18 Q13 10 21 10 H37" fill="none" stroke="#444" stroke-width="2.6"/></svg>
<div style="left:1715.5px;top:905.5px;width:52.0px;height:46.0px;border:1px solid #d9d9d9;box-sizing:border-box;background:#fff;"></div>
<svg style="left:1715.5px;top:905.5px;" width="52" height="46" viewBox="0 0 52 46"><path d="M13 34 Q14 12 37 10" fill="none" stroke="#444" stroke-width="2.6"/></svg>
<div style="left:1579px;top:967px;width:387px;height:1.5px;background:#ebe8eb;"></div>
<div style="top:989.01px;font-size:21.12px;line-height:25.34px;color:#2b2b2b;font-weight:400;white-space:nowrap;letter-spacing:0.530px;left:1596px;">Shadow</div>
<svg style="left:1923px;top:995px;" width="18" height="12" viewBox="0 0 18 12"><path d="M2 9.5 L9 2.5 L16 9.5" fill="none" stroke="#222" stroke-width="2.2"/></svg>
</body></html>
